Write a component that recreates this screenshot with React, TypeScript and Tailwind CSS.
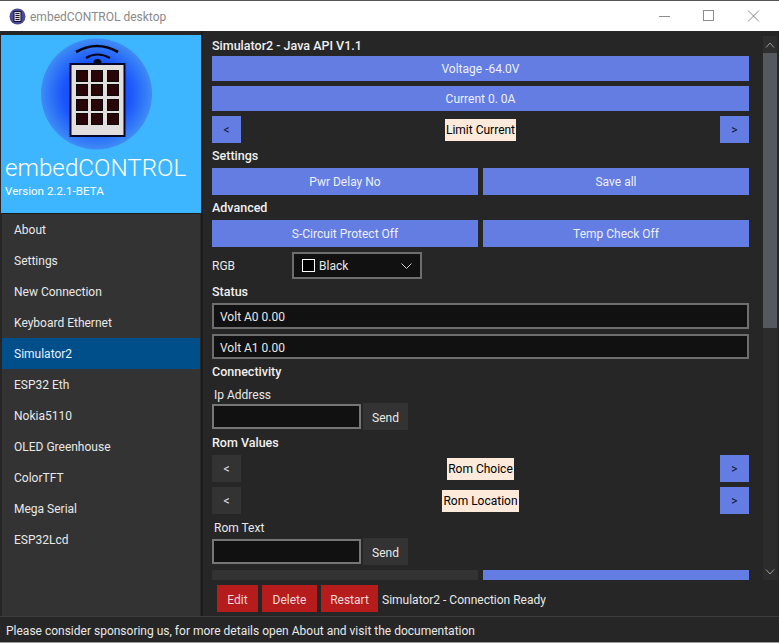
import React from 'react';

const navItems = [
  'About',
  'Settings',
  'New Connection',
  'Keyboard Ethernet',
  'Simulator2',
  'ESP32 Eth',
  'Nokia5110',
  'OLED Greenhouse',
  'ColorTFT',
  'Mega Serial',
  'ESP32Lcd',
];

const Logo = () => (
  <svg width="120" height="120" viewBox="0 0 120 120" className="ml-[39px] shrink-0">
    <defs>
      <radialGradient id="disc">
        <stop offset="0%" stopColor="#0f3dff" />
        <stop offset="60%" stopColor="#1a55fb" />
        <stop offset="100%" stopColor="#3f8cf5" />
      </radialGradient>
    </defs>
    <circle cx="56.5" cy="59" r="55.5" fill="url(#disc)" />
    <path d="M36 17 Q57 5 78 17" fill="none" stroke="#050518" strokeWidth="2.6" />
    <path d="M46 23 Q57 16 70 23" fill="none" stroke="#050518" strokeWidth="2.2" />
    <circle cx="57.5" cy="28" r="4" fill="#050518" />
    <rect x="30.5" y="29" width="54" height="72" fill="#e2dede" stroke="#060628" strokeWidth="2" />
    {[41, 55, 70, 84].map((y) =>
      [42, 57, 73].map((x) => (
        <rect key={`${x}-${y}`} x={x - 5.5} y={y - 5.5} width="11" height="11" fill="#2a0508" stroke="#0a0a0a" />
      )),
    )}
  </svg>
);

const Sidebar = () => (
  <div className="w-[200px] shrink-0 flex flex-col">
    <div className="h-[4px] bg-[#262626]" />
    <div className="h-[178px] bg-[#3db5ff] flex flex-col text-white">
      <Logo />
      <div className="ml-[4px] text-[24.2px] leading-[26px] font-light">embedCONTROL</div>
      <div className="ml-[4px] mt-[2px] text-[11.6px] leading-[16px]">Version 2.2.1-BETA</div>
    </div>
    <div className="flex-1 bg-[#333333] border-t border-[#1c1c1c] ml-[1px] mr-[1px]">
      {navItems.map((item) => (
        <div
          key={item}
          className={`h-[31px] pl-[12px] flex items-center text-[12px] ${
            item === 'Simulator2' ? 'bg-[#004f8b] text-[#e6f2fb]' : 'text-[#e8e8e8]'
          }`}
        >
          {item}
        </div>
      ))}
    </div>
  </div>
);

const Heading = ({ children, className }: { children: React.ReactNode; className: string }) => (
  <div className={`pt-[2px] flex items-center text-[12.5px] font-medium text-[#f0f0f0] ${className}`}>{children}</div>
);

const BlueBar = ({ label, className = '' }: { label: string; className?: string }) => (
  <div className={`bg-[#637de3] text-[#eef0f8] text-[12px] flex items-center justify-center ${className}`}>
    {label}
  </div>
);

const Stepper = ({ label, dark, className = '' }: { label: string; dark?: boolean; className?: string }) => (
  <div className={`h-[27px] shrink-0 flex items-center justify-between ${className}`}>
    <div
      className={`w-[29px] h-full pt-[1px] flex items-center justify-center text-[12px] ${
        dark ? 'bg-[#333333] text-[#e8e8e8]' : 'bg-[#637de3] text-[#10142a]'
      }`}
    >
      &lt;
    </div>
    <div className="bg-[#fdeada] text-black text-[12px] h-[22px] pt-[1px] px-[1px] flex items-center">{label}</div>
    <div className="w-[29px] h-full pt-[1px] bg-[#637de3] text-[#10142a] flex items-center justify-center text-[12px]">
      &gt;
    </div>
  </div>
);

const InputRow = ({ className = '' }: { className?: string }) => (
  <div className={`h-[27px] shrink-0 flex items-center ${className}`}>
    <div className="w-[149px] h-[25px] bg-[#111111] border-2 border-[#767676]" />
    <div className="ml-[2px] w-[45px] h-[27px] pt-[2px] bg-[#333333] text-[#e8e8e8] text-[12px] flex items-center justify-center">
      Send
    </div>
  </div>
);

const Field = ({ text, className }: { text: string; className: string }) => (
  <div className={`shrink-0 bg-[#111111] border-2 border-[#6e6e6e] pl-[6px] pt-[2px] flex items-center text-[12px] text-[#e8e8e8] ${className}`}>
    {text}
  </div>
);

const Scrollbar = () => (
  <div className="w-[14px] ml-[14px] shrink-0 flex flex-col bg-[#2c2c2c]">
    <div className="h-[17px] bg-[#2e2e2e] flex items-center justify-center">
      <svg width="10" height="6" viewBox="0 0 10 6" fill="none" stroke="#9a9a9a">
        <path d="M1 5.5 L5 1 L9 5.5" />
      </svg>
    </div>
    <div className="h-[275px] bg-[#55585c]" />
    <div className="flex-1" />
    <div className="h-[17px] flex items-center justify-center">
      <svg width="10" height="6" viewBox="0 0 10 6" fill="none" stroke="#9a9a9a">
        <path d="M1 .5 L5 5 L9 .5" />
      </svg>
    </div>
  </div>
);

const MainPanel = () => (
  <div className="flex-1 min-w-0 flex flex-col border-l-2 border-[#1c1c1c] bg-[#262626]">
    <div className="h-[5px] shrink-0" />
    <div className="h-[544px] shrink-0 flex pl-[9px] overflow-hidden">
      <div className="w-[537px] shrink-0 flex flex-col">
        <div className="h-[20px] shrink-0 flex items-center text-[12.5px] font-medium text-[#f0f0f0]">
          Simulator2 - Java API V1.1
        </div>
        <BlueBar label="Voltage -64.0V" className="h-[25px] shrink-0" />
        <BlueBar label="Current 0. 0A" className="h-[25px] shrink-0 mt-[5px]" />
        <Stepper label="Limit Current" className="mt-[5px]" />
        <Heading className="h-[25px] shrink-0">Settings</Heading>
        <div className="h-[27px] shrink-0 flex gap-[5px]">
          <BlueBar label="Pwr Delay No" className="flex-1" />
          <BlueBar label="Save all" className="flex-1" />
        </div>
        <Heading className="h-[25px] shrink-0">Advanced</Heading>
        <div className="h-[27px] shrink-0 flex gap-[5px]">
          <BlueBar label="S-Circuit Protect Off" className="flex-1" />
          <BlueBar label="Temp Check Off" className="flex-1" />
        </div>
        <div className="h-[27px] shrink-0 mt-[5px] flex items-center text-[12px] text-[#e8e8e8]">
          <div className="w-[80px]">RGB</div>
          <div className="w-[130px] h-[27px] bg-[#111111] border-2 border-[#6e6e6e] flex items-center pl-[8px]">
            <div className="w-[13px] h-[13px] bg-black border border-white" />
            <div className="ml-[4px] flex-1">Black</div>
            <svg width="11" height="6" viewBox="0 0 11 6" fill="none" stroke="#cfcfcf" className="mr-[8px]">
              <path d="M.5 .5 L5.5 5.5 L10.5 .5" />
            </svg>
          </div>
        </div>
        <Heading className="h-[24px] shrink-0">Status</Heading>
        <Field text="Volt A0 0.00" className="h-[26px]" />
        <Field text="Volt A1 0.00" className="h-[25px] mt-[5px]" />
        <Heading className="h-[25px] shrink-0">Connectivity</Heading>
        <div className="h-[19px] shrink-0 pl-[2px] pt-[2px] flex items-center text-[12px] text-[#e8e8e8]">Ip Address</div>
        <InputRow />
        <Heading className="h-[25px] shrink-0">Rom Values</Heading>
        <Stepper label="Rom Choice" dark />
        <Stepper label="Rom Location" dark className="mt-[5px]" />
        <div className="h-[24px] shrink-0 pl-[2px] pt-[4px] flex items-center text-[12px] text-[#e8e8e8]">Rom Text</div>
        <InputRow />
        <div className="h-[27px] shrink-0 mt-[5px] flex gap-[5px]">
          <div className="flex-1 bg-[#333333]" />
          <div className="flex-1 bg-[#637de3]" />
        </div>
      </div>
      <Scrollbar />
    </div>
    <div className="h-[27px] mt-[5px] shrink-0 pl-[14px] flex items-center gap-[4px] text-[12px]">
      <div className="h-full w-[41px] pt-[2px] bg-[#b71c1c] text-[#f0d8d8] flex items-center justify-center">Edit</div>
      <div className="h-full w-[55px] pt-[2px] bg-[#b71c1c] text-[#f0d8d8] flex items-center justify-center">Delete</div>
      <div className="h-full w-[57px] pt-[2px] bg-[#b71c1c] text-[#f0d8d8] flex items-center justify-center">Restart</div>
      <div className="pt-[2px] text-[#e8e8e8]">Simulator2 - Connection Ready</div>
    </div>
  </div>
);

const TitleBar = () => (
  <div className="h-[30px] shrink-0 bg-white flex items-center">
    <svg width="17" height="17" viewBox="0 0 17 17" className="ml-[9px]">
      <circle cx="8.5" cy="8.5" r="8" fill="#4a4a96" />
      <rect x="5" y="3.5" width="7" height="10" fill="#d8d8d8" stroke="#15153a" />
      <path d="M6.5 5.5h4M6.5 7.5h4M6.5 9.5h4M6.5 11.5h4" stroke="#201020" />
    </svg>
    <div className="ml-[4px] pt-[2px] text-[12px] text-[#8a8a8a] flex-1">embedCONTROL desktop</div>
    <svg width="102" height="12" viewBox="0 0 102 12" fill="none" stroke="#8c8c8c" className="mr-[18px]">
      <path d="M0 6.5 H11" />
      <rect x="44.5" y="0.5" width="10" height="10" />
      <path d="M89 .5 L100 11.5 M100 .5 L89 11.5" />
    </svg>
  </div>
);

const App = () => {
  return (
    <div
      className="w-[779px] h-[643px] flex flex-col bg-[#262626] border-t border-[#555555] border-b border-b-[#9a9a9a] overflow-hidden"
      style={{ fontFamily: 'Roboto, sans-serif' }}
    >
      <TitleBar />
      <div className="flex-1 min-h-0 flex pl-[1px] pr-[1px]">
        <Sidebar />
        <MainPanel />
      </div>
      <div className="h-[26px] shrink-0 bg-[#262626] border-t border-[#3c3c3c] pl-[6px] pt-[2px] flex items-center text-[12px] text-[#e8e8e8]">
        Please consider sponsoring us, for more details open About and visit the documentation
      </div>
    </div>
  );
};

export default App;
